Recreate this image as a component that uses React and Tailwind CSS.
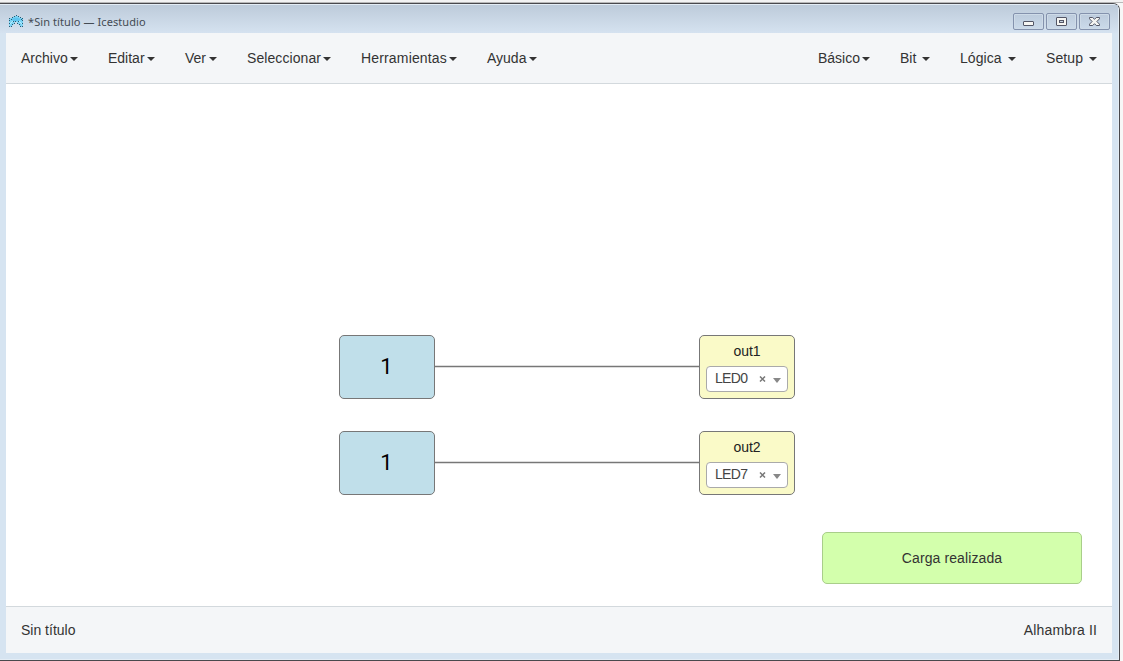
import React from 'react';

const LEFT_MENU = [
  { label: 'Archivo', width: 'w-[57px]', tracking: '' },
  { label: 'Editar', width: 'w-[47px]', tracking: '' },
  { label: 'Ver', width: 'w-[32px]', tracking: '' },
  { label: 'Seleccionar', width: 'w-[84px]', tracking: 'tracking-[0.08px]' },
  { label: 'Herramientas', width: 'w-[96px]', tracking: 'tracking-[0.16px]' },
  { label: 'Ayuda', width: 'w-[50px]', tracking: '' },
];

const RIGHT_MENU = [
  { label: 'Básico', width: 'w-[52px]', tracking: '' },
  { label: 'Bit', width: 'w-[30px]', tracking: '' },
  { label: 'Lógica', width: 'w-[56px]', tracking: 'tracking-[0.08px]' },
  { label: 'Setup', width: 'w-[51px]', tracking: 'tracking-[0.1px]' },
];

function Caret() {
  return (
    <svg width="8" height="4" viewBox="0 0 8 4" className="mt-px shrink-0">
      <path d="M0 0H8L4 4Z" fill="#333" />
    </svg>
  );
}

function Menu({ items }) {
  return (
    <nav className="flex gap-[30px]">
      {items.map((item) => (
        <button key={item.label} className={`flex items-center justify-between leading-5 whitespace-nowrap ${item.width} ${item.tracking}`}>
          <span>{item.label}</span>
          <Caret />
        </button>
      ))}
    </nav>
  );
}

function Logo() {
  return (
    <svg width="16" height="14" viewBox="0 0 16 14" className="mt-[2px] shrink-0">
      <path d="M1 3L4 3L6 1H10L12 3H15V10L14 12L11 10L9 7H7L5 10L2 12L1 10Z" fill="#7bd3f4" />
      <path d="M3 4L8 2.5L13 4L11 6H5Z" fill="#5fc4ee" />
      <path d="M2 9L5 6M14 9L11 6" stroke="#b5ecfc" />
      <path
        d="M1 3h1v1h-1zM3 4h1v1h-1zM4 2h1v1h-1zM6 1h1v1h-1zM8 0h1v1h-1zM10 1h1v1h-1zM12 2h1v1h-1zM13 4h1v1h-1zM15 3h-1v1h1zM1 5h1v1h-1zM14 5h1v1h-1zM1 8h1v1h-1zM14 8h1v1h-1zM1 11h1v1h-1zM14 11h1v1h-1zM3 11h1v1h-1zM12 11h1v1h-1zM4 9h1v1h-1zM11 9h1v1h-1zM6 8h1v1h-1zM9 8h1v1h-1zM7 6h1v1h-1zM5 6h1v1h-1zM10 6h1v1h-1z"
        fill="#285b75"
      />
    </svg>
  );
}

function WindowButton({ children }) {
  return (
    <button className="flex h-[17px] w-[31px] items-center justify-center rounded-[2px] border border-[#8492ad] bg-linear-to-b from-[#bccbdc] to-[#cbdaea] shadow-[inset_0_0_0_1px_#cedbe8]">
      {children}
    </button>
  );
}

function TitleBar() {
  return (
    <header className="flex h-7 shrink-0 justify-between bg-linear-to-b from-[#bdcbda] to-[#d5e2f0] pl-2 pr-2">
      <div className="-mt-px flex h-7 items-start gap-1 pt-[9px] font-['Noto_Sans',sans-serif] text-[11px] leading-4 text-[#444b54]">
        <Logo />
        <span className="pt-px tracking-[0.08px]">*Sin título — Icestudio</span>
      </div>
      <div className="flex gap-[2px] pt-2">
        <WindowButton>
          <svg width="11" height="5" viewBox="0 0 11 5" className="mt-1">
            <rect x=".5" y=".5" width="10" height="4" rx=".5" fill="#f5f5f2" stroke="#535666" />
          </svg>
        </WindowButton>
        <WindowButton>
          <svg width="11" height="9" viewBox="0 0 11 9">
            <rect x=".5" y=".5" width="10" height="8" rx=".5" fill="#f5f5f2" stroke="#535666" />
            <rect x="3.5" y="3.5" width="4" height="2" fill="#c4d1df" stroke="#535666" />
          </svg>
        </WindowButton>
        <WindowButton>
          <svg width="11" height="9" viewBox="0 0 11 9">
            <path d="M.5 .5H3.7L5.5 2.3L7.3 .5H10.5V1.8L7.9 4.5L10.5 7.2V8.5H7.3L5.5 6.7L3.7 8.5H.5V7.2L3.1 4.5L.5 1.8Z" fill="#f5f5f2" stroke="#535666" />
          </svg>
        </WindowButton>
      </div>
    </header>
  );
}

function ConstantBlock() {
  return (
    <div className="flex h-16 w-24 items-center justify-center rounded-[5px] border border-[#777] bg-[#c0dfea] pr-px font-[Roboto,sans-serif] text-[22px] leading-none text-black">
      1
    </div>
  );
}

function OutputBlock({ name, pin }) {
  return (
    <div className="flex h-16 w-24 flex-col items-center rounded-[5px] border border-[#777] bg-[#fafac8] pt-[5px]">
      <div className="h-5 text-sm leading-5 text-[#222]">{name}</div>
      <div className="mt-[5px] flex h-[26px] w-[82px] items-center rounded-[4px] border border-[#aaa] bg-white pl-2 pr-[6px] text-[#444]">
        <span className="-mt-[3px] w-11 text-sm leading-6 tracking-[-0.7px]">{pin}</span>
        <svg width="7" height="6" viewBox="0 0 7 6">
          <path d="M1 .5L6 5.5M6 .5L1 5.5" stroke="#777" strokeWidth="1.5" />
        </svg>
        <svg width="8" height="5" viewBox="0 0 8 5" className="ml-auto mt-[3px]">
          <path d="M0 0H8L4 5Z" fill="#888" />
        </svg>
      </div>
    </div>
  );
}

function Wire() {
  return (
    <svg width="264" height="3" viewBox="0 0 264 3" className="mb-px shrink-0">
      <path d="M0 .5H264M0 2.5H264" stroke="#777" strokeOpacity=".25" />
      <path d="M0 1.5H264" stroke="#777" />
    </svg>
  );
}

export default function App() {
  return (
    <div className="flex h-[661px] w-[1123px] flex-col overflow-hidden bg-[#f7f7f7] font-['Liberation_Sans',sans-serif] text-sm text-[#333]">
      <div className="h-[3px] shrink-0 border-b border-[#b9b9b9] bg-[#f3f3f3]" />
      <div className="flex h-[658px] w-[1120px] flex-col rounded-tr-[7px] border-y border-r border-[#49494d] bg-[#d6e4f1]">
        <div className="flex h-[656px] flex-col rounded-tr-[6px] border-t border-r border-b border-[#e4edf5] bg-[#d6e4f1]">
          <TitleBar />
          <div className="ml-[6px] flex h-[620px] w-[1106px] flex-col bg-white">
            <div className="flex h-[51px] shrink-0 items-center justify-between border-b border-[#d3d9dd] bg-[#f4f6f8] px-[15px]">
              <Menu items={LEFT_MENU} />
              <Menu items={RIGHT_MENU} />
            </div>
            <main className="relative h-[522px] shrink-0 overflow-hidden bg-white">
              <div className="absolute left-[333px] top-[251px] flex items-center">
                <ConstantBlock />
                <Wire />
                <OutputBlock name="out1" pin="LED0" />
              </div>
              <div className="absolute left-[333px] top-[347px] flex items-center">
                <ConstantBlock />
                <Wire />
                <OutputBlock name="out2" pin="LED7" />
              </div>
              <div className="absolute bottom-[22px] right-[30px] flex h-[52px] w-[260px] items-center justify-center rounded-[5px] border border-[#a9ce8a] bg-[#d3ffac] tracking-[0.1px] text-[#333]">
                Carga realizada
              </div>
            </main>
            <footer className="flex grow items-center justify-between border-t border-[#d3d9dd] bg-[#f4f6f8] px-[15px]">
              <span>Sin título</span>
              <span className="tracking-[0.14px]">Alhambra II</span>
            </footer>
          </div>
        </div>
      </div>
    </div>
  );
}
